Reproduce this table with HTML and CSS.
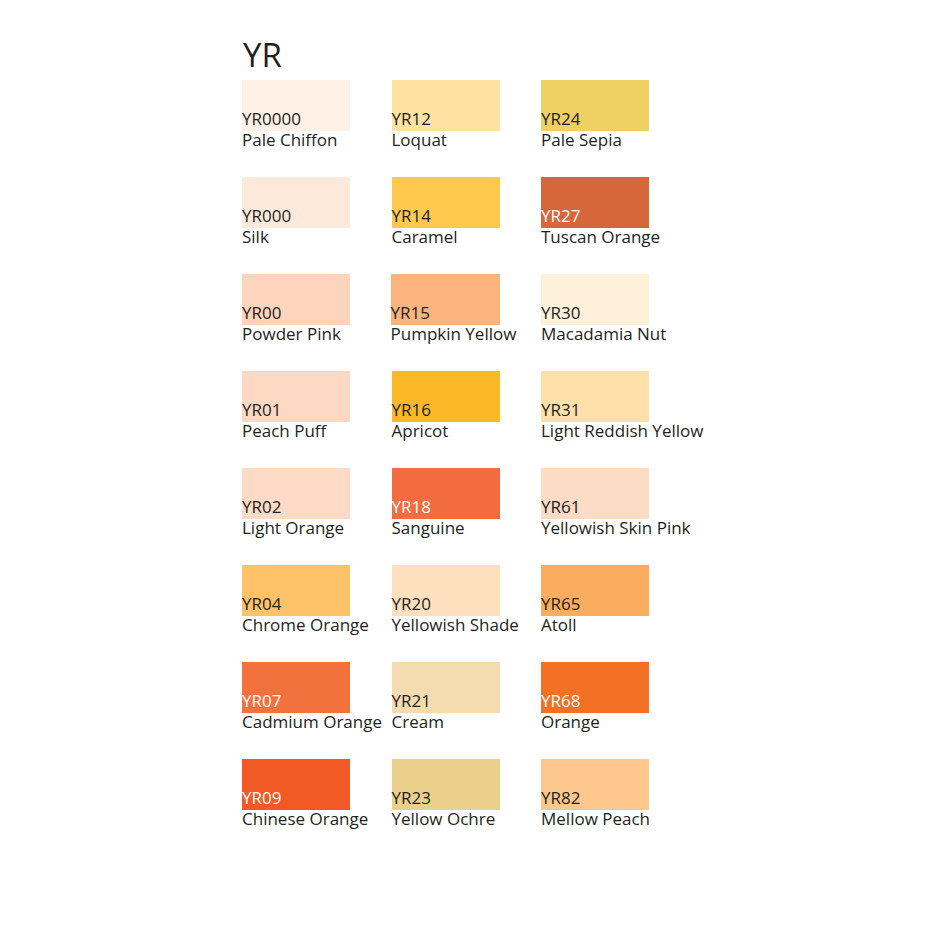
FILE: index.html
```html
<!DOCTYPE html>
<html>
<head>
<meta charset="utf-8">
<link rel="stylesheet" href="styles.css">
</head>
<body>
<div class="page">
  <h1 class="title">YR</h1>
  <div class="grid">
    <div class="item"><div class="swatch" style="background:#fef0e4"><span class="code">YR0000</span></div><div class="name">Pale Chiffon</div></div>
    <div class="item"><div class="swatch" style="background:#fee2a2"><span class="code">YR12</span></div><div class="name">Loquat</div></div>
    <div class="item"><div class="swatch" style="background:#efd062"><span class="code">YR24</span></div><div class="name">Pale Sepia</div></div>

    <div class="item"><div class="swatch" style="background:#fdeadb"><span class="code">YR000</span></div><div class="name">Silk</div></div>
    <div class="item"><div class="swatch" style="background:#fec94c"><span class="code">YR14</span></div><div class="name">Caramel</div></div>
    <div class="item"><div class="swatch" style="background:#d6673a"><span class="code light">YR27</span></div><div class="name">Tuscan Orange</div></div>

    <div class="item"><div class="swatch" style="background:#fdd5bc"><span class="code">YR00</span></div><div class="name">Powder Pink</div></div>
    <div class="item shift"><div class="swatch" style="background:#fcb47f"><span class="code">YR15</span></div><div class="name">Pumpkin Yellow</div></div>
    <div class="item"><div class="swatch" style="background:#fff0da"><span class="code">YR30</span></div><div class="name">Macadamia Nut</div></div>

    <div class="item"><div class="swatch" style="background:#fdd9c3"><span class="code">YR01</span></div><div class="name">Peach Puff</div></div>
    <div class="item"><div class="swatch" style="background:#fbb827"><span class="code">YR16</span></div><div class="name">Apricot</div></div>
    <div class="item"><div class="swatch" style="background:#ffe0a8"><span class="code">YR31</span></div><div class="name">Light Reddish Yellow</div></div>

    <div class="item"><div class="swatch" style="background:#fedbc6"><span class="code">YR02</span></div><div class="name">Light Orange</div></div>
    <div class="item"><div class="swatch" style="background:#f36c3f"><span class="code light">YR18</span></div><div class="name">Sanguine</div></div>
    <div class="item"><div class="swatch" style="background:#fddcc6"><span class="code">YR61</span></div><div class="name">Yellowish Skin Pink</div></div>

    <div class="item"><div class="swatch" style="background:#fec368"><span class="code">YR04</span></div><div class="name">Chrome Orange</div></div>
    <div class="item"><div class="swatch" style="background:#fee0be"><span class="code">YR20</span></div><div class="name">Yellowish Shade</div></div>
    <div class="item"><div class="swatch" style="background:#faad5f"><span class="code">YR65</span></div><div class="name">Atoll</div></div>

    <div class="item"><div class="swatch" style="background:#f2713c"><span class="code light">YR07</span></div><div class="name">Cadmium Orange</div></div>
    <div class="item"><div class="swatch" style="background:#f4dbb0"><span class="code">YR21</span></div><div class="name">Cream</div></div>
    <div class="item"><div class="swatch" style="background:#f47025"><span class="code light">YR68</span></div><div class="name">Orange</div></div>

    <div class="item"><div class="swatch" style="background:#f15a25"><span class="code light">YR09</span></div><div class="name">Chinese Orange</div></div>
    <div class="item"><div class="swatch" style="background:#ebd08c"><span class="code">YR23</span></div><div class="name">Yellow Ochre</div></div>
    <div class="item"><div class="swatch" style="background:#fec78e"><span class="code">YR82</span></div><div class="name">Mellow Peach</div></div>
  </div>
</div>
</body>
</html>
```
FILE: styles.css
```css
html, body {
  margin: 0;
  padding: 0;
  background: #ffffff;
}

body {
  min-height: 950px;
}

.page {
  padding: 38px 0 60px 242px;
  font-family: "Open Sans", "Liberation Sans", sans-serif;
  color: #231f20;
}

.title {
  margin: 0 0 9px 0;
  padding-left: 1px;
  font-size: 33px;
  line-height: 33px;
  font-weight: 400;
}

.grid {
  display: grid;
  grid-template-columns: repeat(3, 108px);
  column-gap: 41.5px;
  row-gap: 29px;
}

.item {
  display: flex;
  flex-direction: column;
}

.item.shift {
  margin-left: -1px;
}

.swatch {
  height: 51px;
  display: flex;
  flex-direction: column;
  justify-content: flex-end;
  padding-bottom: 4px;
  box-sizing: border-box;
}

.code {
  font-size: 17px;
  line-height: 17px;
  white-space: nowrap;
  color: #231f20;
}

.code.light {
  color: #ffffff;
}

.name {
  font-size: 17px;
  line-height: 17px;
  white-space: nowrap;
}
```
